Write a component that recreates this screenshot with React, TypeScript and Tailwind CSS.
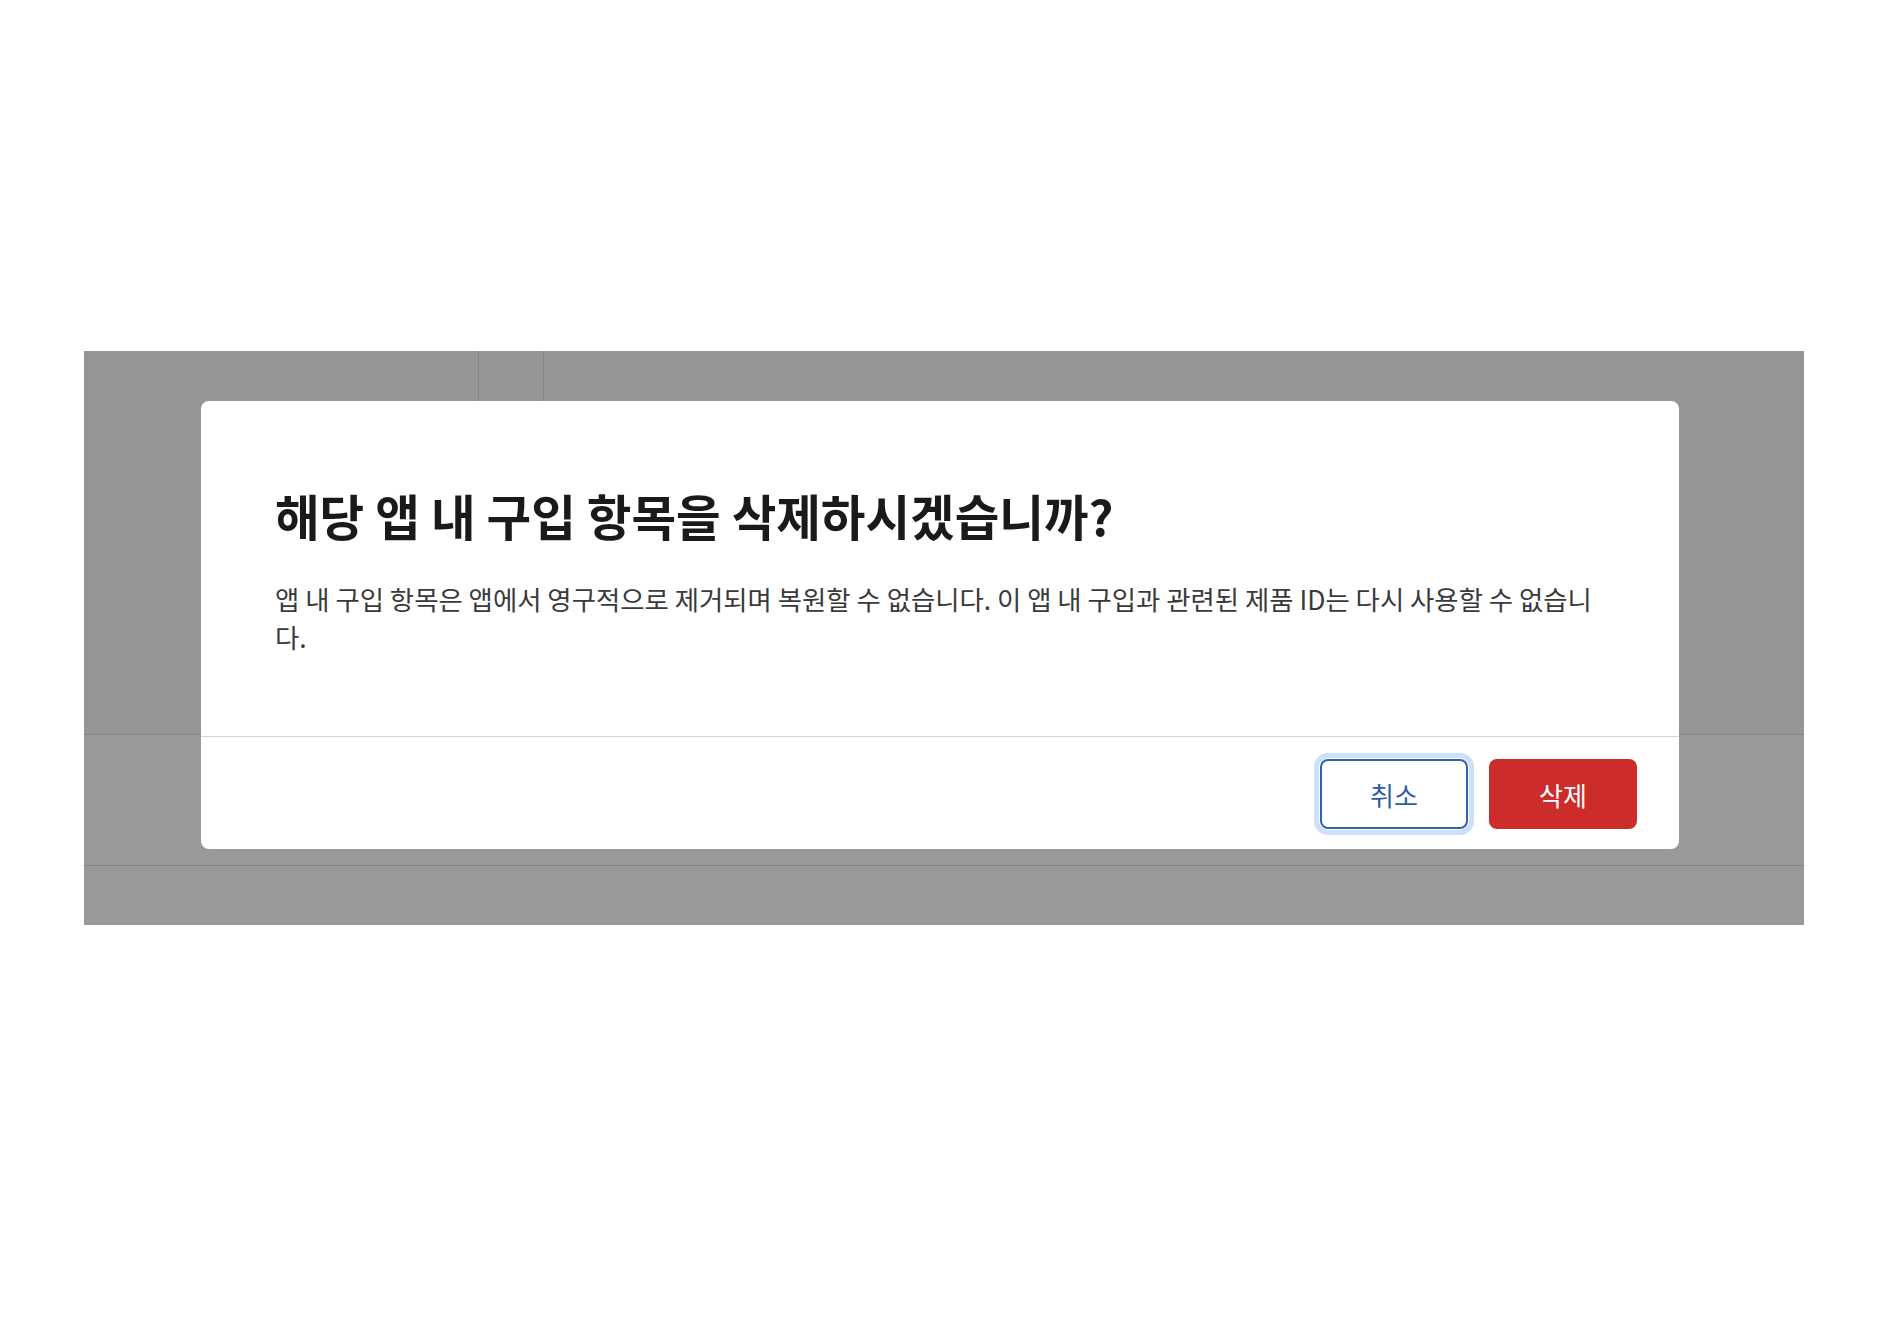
export default function App() {
  return (
    <div className="min-h-screen bg-white pt-[351px] pl-[84px] font-['Noto_Sans_CJK_KR',sans-serif]">
      <div className="relative w-[1720px] h-[574px] bg-[#999999] overflow-hidden">
        {/* dimmed page underneath */}
        <div className="flex flex-col h-full">
          <div className="flex h-[384px] bg-[#959595] border-b border-[#858585]">
            <div className="w-[395px] border-r border-[#858585]" />
            <div className="w-[65px] border-r border-[#858585]" />
            <div className="flex-1" />
          </div>
          <div className="h-[131px] border-b border-[#858585]" />
          <div className="flex-1" />
        </div>

        {/* dialog */}
        <div className="absolute left-[117px] top-[50px] w-[1478px] bg-white rounded-lg">
          <div className="pt-[86px] pb-[80px] px-[74px]">
            <h2 className="text-[48.5px] leading-[56px] font-bold text-[#1a1a1a]">
              해당 앱 내 구입 항목을 삭제하시겠습니까?
            </h2>
            <p className="mt-[37px] text-[26.4px] leading-[38px] text-[#3a3a3a]">
              앱 내 구입 항목은 앱에서 영구적으로 제거되며 복원할 수 없습니다. 이 앱 내 구입과 관련된 제품 ID는 다시 사용할 수 없습니다.
            </p>
          </div>
          <div className="border-t border-[#d4d4d4] flex justify-end gap-[21px] pt-[22px] pb-[20px] pr-[42px]">
            <button className="w-[148px] h-[70px] rounded-lg border-2 border-[#2d63b0] bg-white text-[26px] text-[#2b5ea8] ring-[5px] ring-[#cde0f9] ring-offset-1">
              취소
            </button>
            <button className="w-[148px] h-[70px] rounded-lg bg-[#cc2d2b] text-[26px] text-white">
              삭제
            </button>
          </div>
        </div>
      </div>
    </div>
  );
}
